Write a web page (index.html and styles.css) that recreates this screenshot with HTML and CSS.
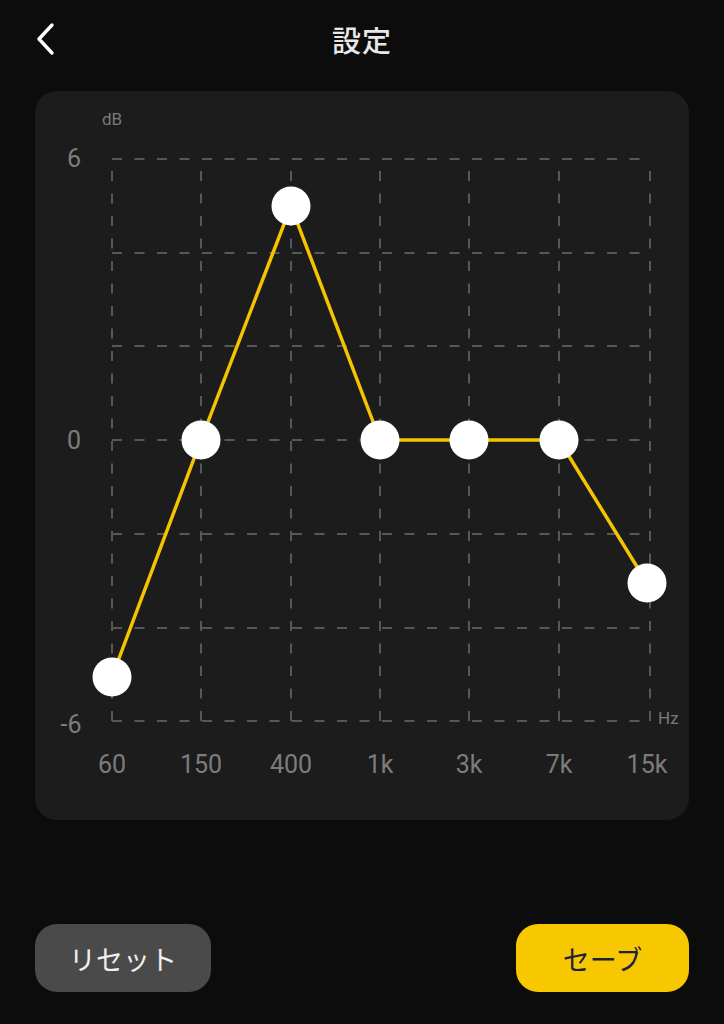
FILE: index.html
```html
<!DOCTYPE html>
<html lang="ja">
<head>
    <meta charset="UTF-8">
    <meta name="viewport" content="width=device-width, initial-scale=1.0">
    <title>設定</title>
    <link rel="stylesheet" href="styles.css">
</head>
<body>
    <div class="header">
        <button class="back" type="button" aria-label="戻る">
            <svg width="22" height="34" viewBox="0 0 22 34">
                <path d="M17 3 L4 17 L17 31" fill="none" stroke="#ffffff" stroke-width="3.4" stroke-linecap="round" stroke-linejoin="round"/>
            </svg>
        </button>
        <h1 class="titulo">設定</h1>
        <div></div>
    </div>

    <div class="card">
        <svg class="eq" width="654" height="729" viewBox="35 91 654 729">
            <!-- grade -->
            <g class="grid">
                <line x1="112" y1="159" x2="650" y2="159"/>
                <line x1="112" y1="253" x2="650" y2="253"/>
                <line x1="112" y1="346" x2="650" y2="346"/>
                <line x1="112" y1="440" x2="650" y2="440"/>
                <line x1="112" y1="534" x2="650" y2="534"/>
                <line x1="112" y1="628" x2="650" y2="628"/>
                <line x1="112" y1="721" x2="650" y2="721"/>
                <line x1="112" y1="721" x2="112" y2="159"/>
                <line x1="201" y1="721" x2="201" y2="159"/>
                <line x1="291" y1="721" x2="291" y2="159"/>
                <line x1="380" y1="721" x2="380" y2="159"/>
                <line x1="469" y1="721" x2="469" y2="159"/>
                <line x1="559" y1="721" x2="559" y2="159"/>
                <line x1="650" y1="721" x2="650" y2="159"/>
            </g>

            <text class="unit" x="112" y="125" text-anchor="middle">dB</text>
            <text class="unit" x="658" y="724">Hz</text>

            <g class="axis" text-anchor="middle">
                <text x="74" y="167">6</text>
                <text x="74" y="449">0</text>
                <text x="71" y="733">-6</text>

                <text x="112" y="773">60</text>
                <text x="201" y="773">150</text>
                <text x="291" y="773">400</text>
                <text x="380" y="773">1k</text>
                <text x="469" y="773">3k</text>
                <text x="559" y="773">7k</text>
                <text x="647" y="773">15k</text>
            </g>

            <polyline class="curva" points="112,677 201,440 291,206 380,440 469,440 559,440 647,583"/>

            <g class="pontos">
                <circle cx="112" cy="677" r="19.5"/>
                <circle cx="201" cy="440" r="19.5"/>
                <circle cx="291" cy="206" r="19.5"/>
                <circle cx="380" cy="440" r="19.5"/>
                <circle cx="469" cy="440" r="19.5"/>
                <circle cx="559" cy="440" r="19.5"/>
                <circle cx="647" cy="583" r="19.5"/>
            </g>
        </svg>
    </div>

    <div class="footer">
        <button class="button reset" type="button">リセット</button>
        <button class="button save" type="button">セーブ</button>
    </div>
</body>
</html>
```

FILE: styles.css
```css
body {
    background-color: #0c0c0c;
    margin: 0;
    padding: 0 35px;
    font-family: Roboto, "Noto Sans CJK JP", sans-serif;
}

.header {
    display: grid;
    grid-template-columns: 1fr auto 1fr;
    align-items: center;
    height: 78px;
}

.back {
    background: none;
    border: none;
    padding: 0;
    width: 22px;
    height: 34px;
    cursor: pointer;
}

.back svg {
    display: block;
}

.titulo {
    margin: 0;
    color: #e8e8e8;
    font-family: "Noto Sans CJK JP", sans-serif;
    font-size: 29px;
    font-weight: 500;
    letter-spacing: 1px;
}

.card {
    background-color: #1c1c1c;
    border-radius: 22px;
    height: 729px;
    margin-top: 13px;
}

.eq {
    display: block;
}

.grid line {
    stroke: #575757;
    stroke-width: 2;
    stroke-dasharray: 10 12.5;
}

.unit {
    fill: #7a7a7a;
    font-size: 17px;
}

.axis text {
    fill: #7c7c7c;
    font-size: 25px;
}

.curva {
    fill: none;
    stroke: #f5c400;
    stroke-width: 3.5;
    stroke-linejoin: round;
}

.pontos circle {
    fill: #ffffff;
}

.footer {
    display: flex;
    justify-content: space-between;
    margin-top: 104px;
}

.button {
    height: 68px;
    border: none;
    border-radius: 22px;
    font-family: "Noto Sans CJK JP", sans-serif;
    font-size: 27px;
    cursor: pointer;
}

.reset {
    width: 176px;
    background-color: #4a4a4a;
    color: #f0f0f0;
}

.save {
    width: 173px;
    background-color: #f7c800;
    color: #1b2140;
}
```
